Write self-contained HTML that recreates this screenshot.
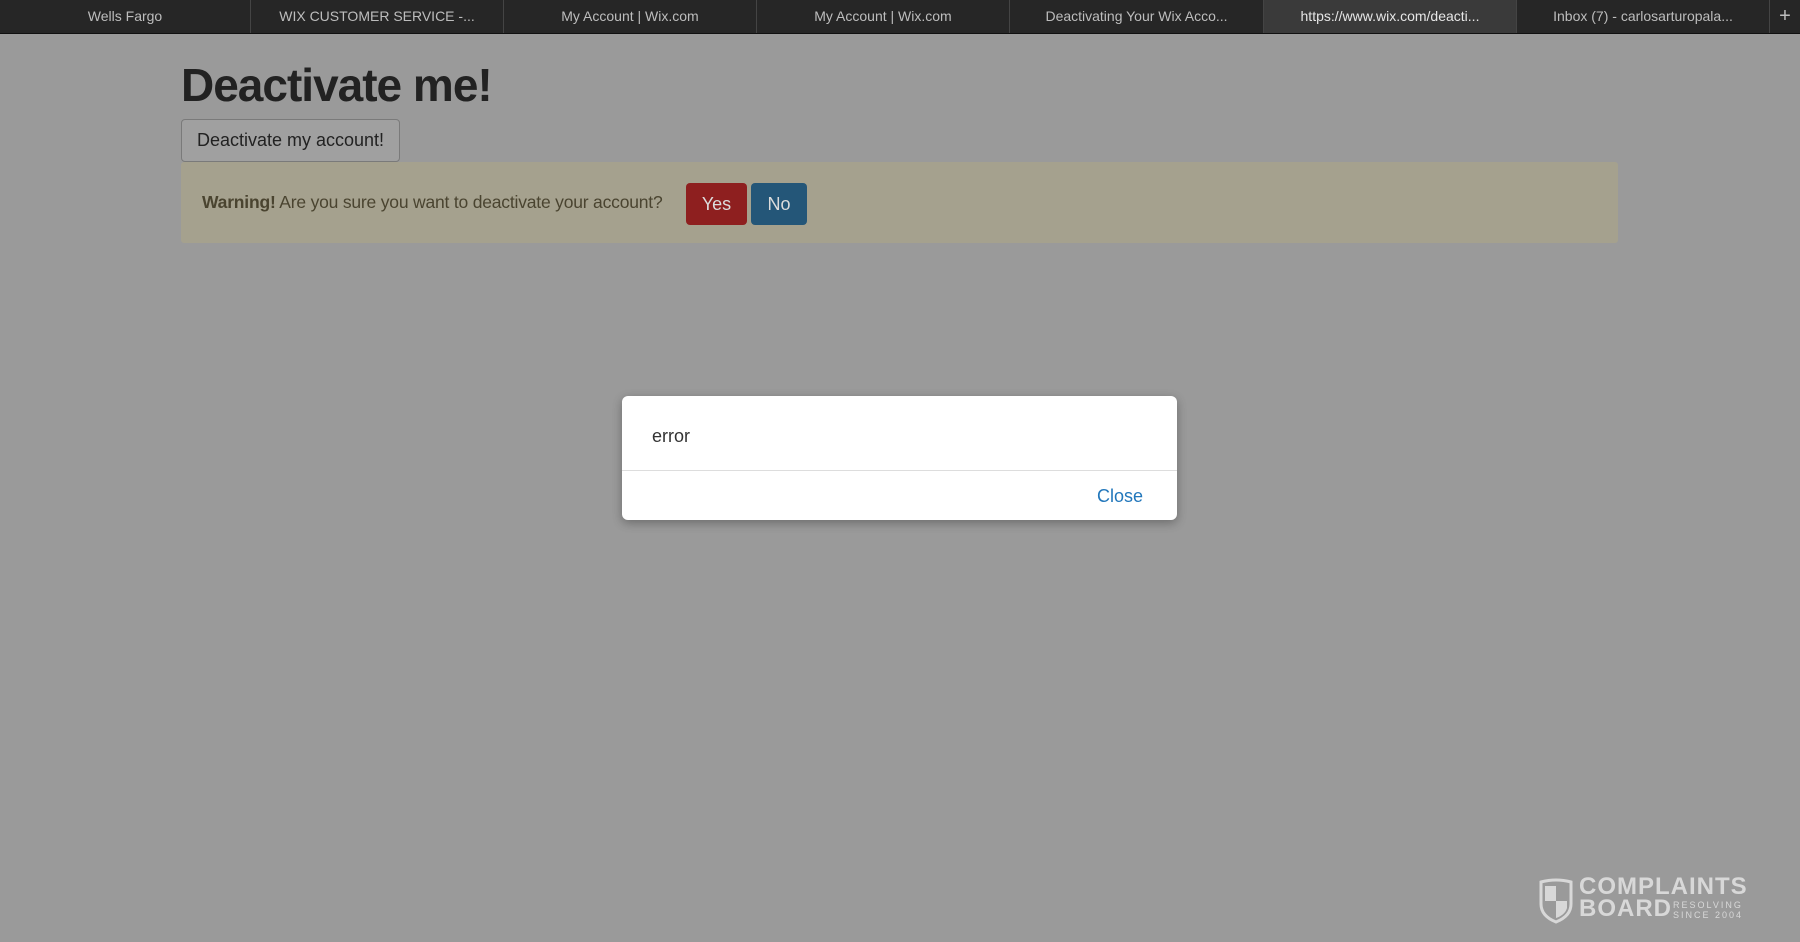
<!DOCTYPE html>
<html><head><style>
body{margin:0;width:1800px;height:942px;background:#9a9a9a;font-family:"Liberation Sans",Arial,sans-serif;position:relative;overflow:hidden}
.tabs{position:absolute;top:0;left:0;width:1800px;height:33px;background:#262626;border-bottom:1px solid #111}
.tab{position:absolute;top:0;height:33px;line-height:33px;text-align:center;color:#bdbdbd;font-size:14px;border-right:1px solid #444;box-sizing:border-box}
.tab.act{background:#3a3a3a;color:#e6e6e6}
h1{position:absolute;left:181px;top:58px;margin:0;font-size:46px;font-weight:bold;color:#222;letter-spacing:-1px}
.btn1{position:absolute;left:181px;top:119px;width:219px;height:43px;box-sizing:border-box;border:1px solid #7a7a7a;border-radius:4px;background:#a0a0a0;color:#222;font-size:18px;line-height:41px;text-align:center}
.alert{position:absolute;left:181px;top:162px;width:1437px;height:81px;background:#a5a18e;border-radius:3px}
.alert .t{position:absolute;left:21px;top:30px;font-size:17.5px;color:#4a4430;letter-spacing:-0.2px}
.yes,.no{position:absolute;top:21px;height:42px;line-height:42px;text-align:center;color:#dcdcdc;font-size:18px;border-radius:4px}
.yes{left:505px;width:61px;background:#8e1f1f}
.no{left:570px;width:56px;background:#245678}
.modal{position:absolute;left:622px;top:396px;width:555px;height:124px;background:#fff;border-radius:6px;box-shadow:0 3px 10px rgba(0,0,0,.3)}
.modal .e{position:absolute;left:30px;top:30px;font-size:18px;color:#333}
.modal .d{position:absolute;left:0;right:0;top:74px;border-top:1px solid #ddd}
.modal .c{position:absolute;left:475px;top:90px;font-size:18px;color:#2277bb}
.logo{position:absolute;left:1538px;top:876px;color:#d8d8d8}
</style></head><body>
<div class="tabs">
<div class="tab" style="left:0;width:251px">Wells Fargo</div>
<div class="tab" style="left:251px;width:253px">WIX CUSTOMER SERVICE -...</div>
<div class="tab" style="left:504px;width:253px">My Account | Wix.com</div>
<div class="tab" style="left:757px;width:253px">My Account | Wix.com</div>
<div class="tab" style="left:1010px;width:254px">Deactivating Your Wix Acco...</div>
<div class="tab act" style="left:1264px;width:253px">https://www.wix.com/deacti...</div>
<div class="tab" style="left:1517px;width:253px">Inbox (7) - carlosarturopala...</div>
<div class="tab" style="left:1770px;width:30px;font-size:20px;border:none">+</div>
</div>
<h1>Deactivate me!</h1>
<div class="btn1">Deactivate my account!</div>
<div class="alert"><div class="t"><b>Warning!</b> Are you sure you want to deactivate your account?</div>
<div class="yes">Yes</div><div class="no">No</div></div>
<div class="modal"><div class="e">error</div><div class="d"></div><div class="c">Close</div></div>
<div class="logo">
<svg width="36" height="46" viewBox="0 0 36 46" style="position:absolute;left:0;top:2px"><path d="M3 4 Q18 0 33 4 V26 Q33 38 18 44 Q3 38 3 26Z" fill="none" stroke="#d8d8d8" stroke-width="3"/><path d="M7 8 H18 V23 H7Z M18 23 H29 V30 Q27 37 18 40Z" fill="#d8d8d8"/></svg>
<div style="position:absolute;left:41px;top:0;font-size:24px;line-height:22px;font-weight:bold;letter-spacing:1px;white-space:nowrap">COMPLAINTS</div>
<div style="position:absolute;left:41px;top:22px;font-size:24px;line-height:22px;font-weight:bold;letter-spacing:1px">BOARD</div>
<div style="position:absolute;left:135px;top:24px;font-size:9px;line-height:10px;letter-spacing:2px;white-space:nowrap">RESOLVING<br>SINCE 2004</div>
</div>
</body></html>
